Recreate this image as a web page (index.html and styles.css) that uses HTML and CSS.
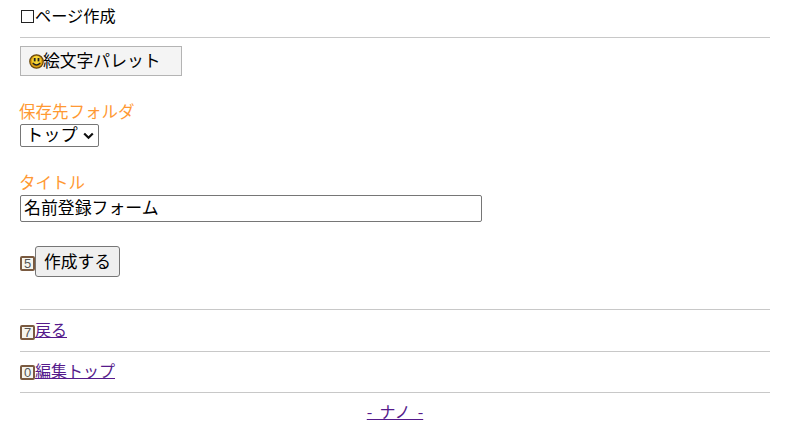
FILE: index.html
```html
<!DOCTYPE html>
<html lang="ja">
<head>
<meta charset="utf-8">
<title>ページ作成</title>
<link rel="stylesheet" href="styles.css">
</head>
<body>
<div class="page">
  <div class="heading"><span class="box"></span><span>ページ作成</span></div>
  <hr class="rule rule-top">
  <button class="palette" type="button">
    <svg class="smile" width="15" height="15" viewBox="0 0 15 15"><circle cx="7.5" cy="7.5" r="6.7" fill="#e0a010" stroke="#6b4a10" stroke-width="1.3"/><circle cx="7.5" cy="6.5" r="4.4" fill="#f8d838"/><rect x="4.8" y="4" width="1.8" height="3.4" fill="#222"/><rect x="8.6" y="4" width="1.8" height="3.4" fill="#222"/><path d="M3.8 9Q7.5 13 11.2 9" fill="none" stroke="#222" stroke-width="1.4"/></svg><span class="palette-text">絵文字パレット</span>
  </button>
  <div class="field folder">
    <label class="label">保存先フォルダ</label>
    <select class="select"><option>トップ</option></select>
  </div>
  <div class="field title">
    <label class="label">タイトル</label>
    <input class="input" type="text" value="名前登録フォーム">
  </div>
  <div class="submit-row">
    <span class="key">5</span><button class="submit" type="button">作成する</button>
  </div>
  <hr class="rule rule-a">
  <div class="link-row link-first"><span class="key">7</span><a href="#">戻る</a></div>
  <hr class="rule">
  <div class="link-row"><span class="key">0</span><a href="#">編集トップ</a></div>
  <hr class="rule">
  <div class="footer"><a href="#">- ナノ -</a></div>
</div>
</body>
</html>
```
FILE: styles.css
```css
* { box-sizing: border-box; }
html, body { margin: 0; padding: 0; background: #fff; }
body {
  font-family: "Noto Sans CJK JP", "Liberation Sans", sans-serif;
  font-size: 16px;
  color: #000;
  overflow: hidden;
}
.page { width: 750px; margin-left: 20px; }
.heading {
  display: flex;
  align-items: center;
  height: 24px;
  margin-top: 3px;
  font-size: 16.2px;
}
.box {
  width: 13px;
  height: 13px;
  margin: 2px 1px 0 1px;
  border: 1px solid #222;
}
.rule {
  height: 1px;
  margin: 0;
  border: 0;
  background: #c8c8c8;
}
.rule-top { margin-top: 10px; }
.palette {
  display: flex;
  align-items: center;
  width: 162px;
  height: 30px;
  margin-top: 8px;
  padding: 0 0 0 8px;
  background: #f4f4f4;
  border: 1px solid #b4b4b4;
  font: inherit;
  font-size: 16.8px;
  color: #000;
}
.palette-text { margin-left: -1px; margin-bottom: 2px; }
.smile { flex: none; }
.field { display: flex; flex-direction: column; align-items: flex-start; }
.label { color: #ff9933; font-size: 16.5px; line-height: 24px; margin-left: -1px; }
.folder { margin-top: 23px; }
.title { margin-top: 23px; }
.select {
  appearance: none;
  width: 79px;
  height: 23px;
  margin-top: 1px;
  padding: 0 0 3px 5px;
  font: inherit;
  font-size: 17.2px;
  line-height: 1;
  color: #000;
  border: 1px solid #767676;
  border-radius: 2px;
  background: #fff url("data:image/svg+xml,%3Csvg xmlns='http://www.w3.org/2000/svg' width='11' height='8'%3E%3Cpath d='M1.2 1.5L5.5 5.8L9.8 1.5' fill='none' stroke='%23111' stroke-width='2.2'/%3E%3C/svg%3E") no-repeat 62px 7px;
}
.input {
  width: 462px;
  height: 27px;
  padding: 0 3px 5px 3px;
  margin-top: 1px;
  font: inherit;
  font-size: 16.9px;
  color: #000;
  border: 1px solid #767676;
  border-radius: 2px;
}
.submit-row { display: flex; align-items: center; margin-top: 24px; height: 31px; }
.key {
  display: inline-flex;
  align-items: center;
  justify-content: center;
  flex: none;
  width: 15px;
  height: 15px;
  border: 2px solid #7a5a40;
  border-radius: 2px;
  background: #f5f5ef;
  font-family: "Liberation Sans", sans-serif;
  font-size: 13px;
  font-weight: 400;
  line-height: 1;
  color: #555;
}
.submit-row .key { margin-top: 3px; }
.submit {
  width: 85px;
  height: 31px;
  padding: 0 0 2px;
  font: inherit;
  font-size: 16.8px;
  color: #000;
  background: #efefef;
  border: 1px solid #767676;
  border-radius: 3px;
}
.rule-a { margin-top: 32px; }
.link-row { display: flex; align-items: center; height: 40px; }
.link-first { height: 41px; }
.link-first .key { margin-top: 4px; }
.link-row a { line-height: 24px; margin-bottom: 4px; }
a { color: #551a8b; }
.footer { text-align: center; height: 37px; line-height: 37px; word-spacing: 3.5px; }
```
